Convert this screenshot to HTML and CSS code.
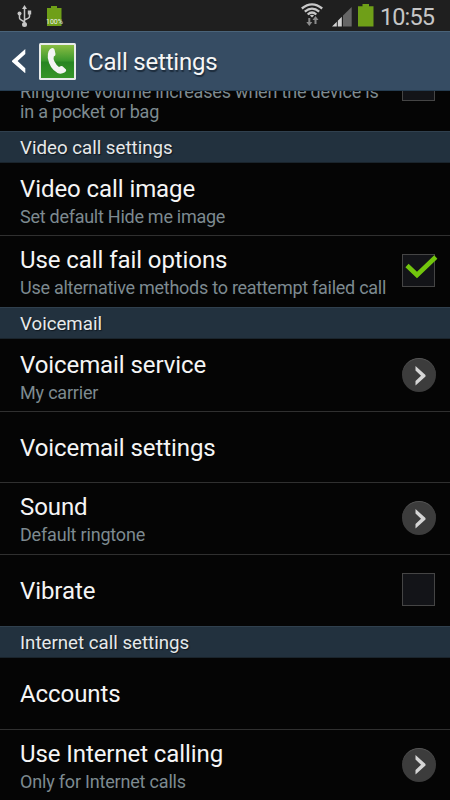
FILE: index.html
```html
<!DOCTYPE html>
<html lang="en">
<head>
<meta charset="utf-8">
<title>Call settings</title>
<link rel="stylesheet" href="styles.css">
</head>
<body>
<div class="phone">
  <div class="status">
    <svg class="usb" width="16" height="24" viewBox="0 0 16 24" fill="none" stroke="#c6c6c6" stroke-width="1.5">
      <path d="M7.5 3v16M2.5 10v3q0 1 1.2 1.7L7.5 17M12.5 9v2.500q0 1-1.200 1.700L7.500 15"/>
      <g fill="#c6c6c6" stroke="none"><path d="M7.500 0l2.500 4H5z"/><circle cx="7.500" cy="19.500" r="2.500"/><circle cx="2.500" cy="8.500" r="2"/><path d="M10.800 5.500h3.400v4h-3.400z"/></g>
    </svg>
    <div class="mini"><svg width="15" height="20" viewBox="0 0 15 20"><path fill="#6f9f18" d="M4 0h6v2h4.500v18H0V2h4z"/></svg><span>100%</span></div>
    <svg class="wifi" width="22" height="24" viewBox="0 0 22 24">
      <g fill="none" stroke="#c8c8c8" stroke-width="2.300"><path d="M.8 5.500Q11-2.700 21.200 5.500M3.800 8.700Q11 2.600 18.200 8.700M6.700 11.500Q11 7.600 15.300 11.500"/></g>
      <path fill="#c8c8c8" d="M8.900 12.600q2.100-1.600 4.200 0L11 14.600z"/>
      <path fill="#8b8b8b" d="M7.300 15h2v4h2l-3 4-3-4h2zM13.500 21h2v-4h2l-3-4-3 4h2z"/>
    </svg>
    <svg class="signal" width="20" height="20" viewBox="0 0 20 20"><path fill="#d2d2d2" d="M0 19.500L4.800 14.800V19.500zM5.800 13.800L9.800 9.800V19.500H5.800z"/><path fill="#666" d="M11 8.600L19.700 0V19.500H11z"/></svg>
    <svg class="battery" width="16" height="23" viewBox="0 0 16 23"><path fill="#6f9f18" d="M4.500 0h6.500v2.200h4.500V22.500H0V2.200h4.500z"/></svg>
    <span class="clock">10:55</span>
  </div>
  <header class="bar">
    <svg class="back" width="14" height="24" viewBox="0 0 14 24"><path fill="#fff" d="M13.300 0v5L5.600 12l7.700 7.300v5L0 12.700v-1z"/></svg>
    <svg class="app" width="37" height="37" viewBox="0 0 37 37">
      <defs><linearGradient id="green" x2="0" y2="1"><stop stop-color="#8bbd43"/><stop offset=".48" stop-color="#3a972c"/><stop offset=".52" stop-color="#288522"/><stop offset="1" stop-color="#369528"/></linearGradient></defs>
      <rect width="37" height="37" rx="1.500" fill="#e9ebea"/><rect x="2" y="2" width="33" height="33" fill="url(#green)"/>
      <path fill="#f4f4f4" d="M9.500 8.500Q10.500 5.500 13 5Q15 4.700 15.500 6.500L16.500 11Q16.700 12.500 14.800 13.500Q14 16 15.500 18.500Q17.500 22.500 20 24Q22.500 22.500 23.500 23.300L27 26.500Q28 28 25.500 29.500Q22 31.500 18.500 30Q10.500 25.500 8.800 15Q8.500 11 9.500 8.500z"/>
    </svg>
    <h1>Call settings</h1>
  </header>
  <main class="list">
    <div class="row partial"><div class="text"><p class="sub">Ringtone volume increases when the device is<br>in a pocket or bag</p></div><i class="box"></i></div>
    <h2>Video call settings</h2>
    <div class="row first"><div class="text"><p class="name">Video call image</p><p class="sub tight">Set default Hide me image</p></div></div>
    <div class="row last double"><div class="text"><p class="name">Use call fail options</p><p class="sub tight">Use alternative methods to reattempt failed call</p></div><i class="box"><svg class="tick" width="34" height="24" viewBox="0 0 34 24"><path d="M2 10.500L12 20 30.800 2" fill="none" stroke="#72c50d" stroke-width="4.600"/></svg></i></div>
    <h2>Voicemail</h2>
    <div class="row first"><div class="text"><p class="name">Voicemail service</p><p class="sub">My carrier</p></div><i class="go"><svg width="11" height="20" viewBox="0 0 11 20"><path d="M.5 0L10.500 9 10.500 10.500.5 19.500V15L6 9.800.5 4.500z" fill="#d5d5d5"/></svg></i></div>
    <div class="row single"><div class="text"><p class="name">Voicemail settings</p></div></div>
    <div class="row sound"><div class="text"><p class="name">Sound</p><p class="sub">Default ringtone</p></div><i class="go"><svg width="11" height="20" viewBox="0 0 11 20"><path d="M.5 0L10.500 9 10.500 10.500.5 19.500V15L6 9.800.5 4.500z" fill="#d5d5d5"/></svg></i></div>
    <div class="row last"><div class="text"><p class="name">Vibrate</p></div><i class="box"></i></div>
    <h2>Internet call settings</h2>
    <div class="row"><div class="text"><p class="name">Accounts</p></div></div>
    <div class="row last double"><div class="text"><p class="name">Use Internet calling</p><p class="sub">Only for Internet calls</p></div><i class="go"><svg width="11" height="20" viewBox="0 0 11 20"><path d="M.5 0L10.500 9 10.500 10.500.5 19.500V15L6 9.800.5 4.500z" fill="#d5d5d5"/></svg></i></div>
  </main>
</div>
</body>
</html>
```
FILE: styles.css
```css
* { box-sizing: border-box; margin: 0; padding: 0; }
body { background: #050505; font-family: Roboto, sans-serif; color: #f5f5f5; }
.phone { width: 450px; height: 800px; overflow: hidden; display: flex; flex-direction: column; background: #050505; }
svg { display: block; flex: none; }
.status { flex: none; height: 31px; background: #1f1f1f; display: flex; align-items: flex-start; }
.usb { margin: 5px 0 0 17px; }
.mini { position: relative; margin: 6px 0 0 14px; width: 15px; height: 20px; }
.mini span { position: absolute; left: -1px; top: 12px; font-size: 7px; line-height: 8px; color: #eee; }
.wifi { margin: 3px 0 0 239px; }
.signal { margin: 7px 0 0 9px; }
.battery { margin: 4px 0 0 6px; }
.clock { margin-left: 6px; font-size: 23.5px; line-height: 34px; color: #c6c6c6; letter-spacing: -0.9px; }
.bar { flex: none; height: 60px; background: #364c63; border-top: 1px solid #4a6379; border-bottom: 1px solid #263d51; display: flex; align-items: center; }
.back { margin-left: 12px; }
.app { margin-left: 13px; }
h1 { margin: 2px 0 0 12px; font-size: 24px; line-height: 30px; font-weight: 400; letter-spacing: -0.2px; text-shadow: 1px 2px 1px #1d2c3c; }
.list { flex: 1; min-height: 0; overflow: hidden; }
.row { height: 72px; border-bottom: 1px solid #303030; padding: 0 14px 0 20px; display: flex; align-items: center; justify-content: space-between; }
.row.first { height: 73px; }
.row.single { height: 71px; }
.row.last { height: 71px; padding-bottom: 1px; border-bottom: 0; }
.row.partial { height: 40px; border: 0; align-items: flex-end; padding-bottom: 9px; }
.text { white-space: nowrap; }
.name { font-size: 24px; line-height: 30px; letter-spacing: -0.08px; }
.sub { font-size: 18px; line-height: 20px; color: #7d8a90; letter-spacing: -0.19px; }
.sub.tight { letter-spacing: -0.265px; }
.name + .sub { line-height: 25px; }
.first .text { padding-top: 5px; }
.last .text, .single .text { padding-top: 1px; }
.double .text { padding-top: 3px; }
.sound .text { padding-top: 2px; }
h2 { height: 32px; padding-left: 20px; font-size: 18.7px; line-height: 33px; font-weight: 400; color: #e6e9ea; background: #22313e; border-top: 1px solid #30404e; border-bottom: 1px solid #1a242c; text-shadow: 1px 1px 1px #101820; }
.box { position: relative; flex: none; width: 33px; height: 33px; margin: 0 1px 2px 0; background: #131418; border: 1px solid #454545; }
.partial .box { margin-bottom: 21px; }
.tick { position: absolute; left: 2px; top: 0; }
.go { flex: none; width: 34px; height: 34px; border-radius: 50%; background: #3c3c3c; border-top: 1px solid #565656; display: flex; align-items: center; justify-content: center; padding-left: 2px; }
.sound .go, .double .go { margin-bottom: 1px; }
```
